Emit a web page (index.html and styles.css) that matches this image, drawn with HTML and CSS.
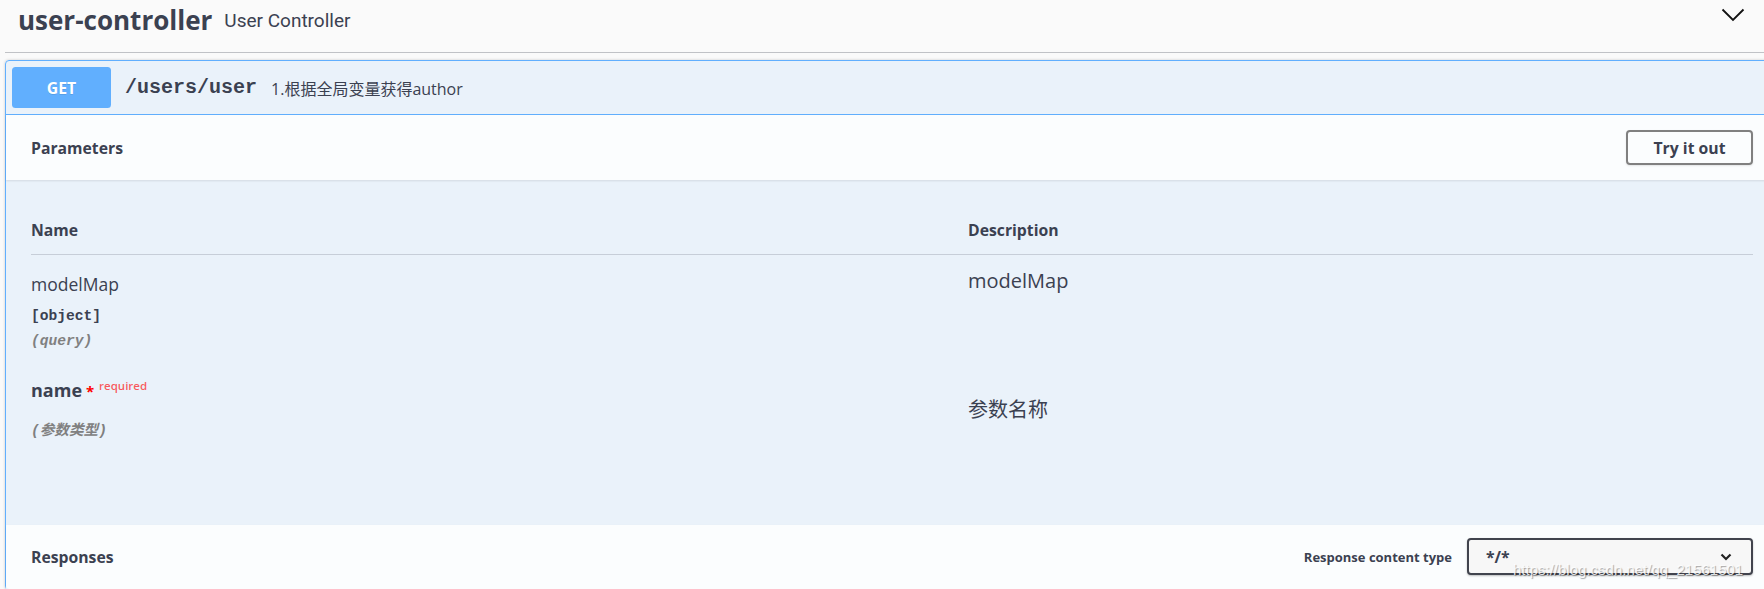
FILE: index.html
```html
<!DOCTYPE html>
<html lang="zh">
<head>
<meta charset="utf-8">
<title>user-controller</title>
<link rel="stylesheet" href="styles.css">
</head>
<body>
<div class="page">
  <div class="tag">
    <h3 class="tag-title"><span class="tag-name">user-controller</span><small class="tag-desc">User Controller</small></h3>
    <svg class="tag-arrow" viewBox="0 0 24 14" width="24" height="14"><polyline points="1.5,1.5 12,12 22.5,1.5" fill="none" stroke="#111" stroke-width="1.8"/></svg>
  </div>

  <div class="opblock">
    <div class="summary">
      <span class="method">GET</span>
      <span class="path">/users/user</span>
      <span class="summary-desc">1.根据全局变量获得author</span>
    </div>

    <div class="section-header">
      <h4 class="section-title">Parameters</h4>
      <button class="try-out">Try it out</button>
    </div>

    <div class="params">
      <div class="params-table">
        <div class="th">Name</div>
        <div class="th">Description</div>

        <div class="name-cell row1">
          <div class="param-name">modelMap</div>
          <div class="param-type">[object]</div>
          <div class="param-in">(query)</div>
        </div>
        <div class="desc-cell first">modelMap</div>

        <div class="name-cell">
          <div class="param-name required">name<span class="star">&nbsp;*</span><span class="req">required</span></div>
          <div class="param-in gap">(参数类型)</div>
        </div>
        <div class="desc-cell second">参数名称</div>
      </div>
    </div>

    <div class="section-header responses">
      <h4 class="section-title">Responses</h4>
      <div class="content-type">
        <span class="ct-label">Response content type</span>
        <div class="select">
          <span>*/*</span>
          <svg class="select-arrow" viewBox="0 0 12 8" width="12" height="8"><polyline points="1.5,1.5 6,6 10.5,1.5" fill="none" stroke="#222" stroke-width="2.2"/></svg>
        </div>
      </div>
    </div>
  </div>

  <div class="watermark">https://blog.csdn.net/qq_21561501</div>
</div>
</body>
</html>
```

FILE: styles.css
```css
html, body {
  margin: 0;
  padding: 0;
}

body {
  background: #fafafa;
  overflow: hidden;
  font-family: "Open Sans", "Noto Sans CJK SC", sans-serif;
  color: #3b4151;
}

.page {
  position: relative;
  margin-left: 5px;
  width: 1771px;
}

/* ---- tag header ---- */
.tag {
  display: flex;
  align-items: flex-start;
  justify-content: space-between;
  height: 52px;
  padding-left: 13px;
  border-bottom: 1px solid rgba(59, 65, 81, 0.3);
}

.tag-title {
  display: flex;
  align-items: center;
  margin: 0;
  padding-top: 1.5px;
  font-size: 26px;
  font-weight: 700;
  line-height: 36px;
  white-space: nowrap;
}

.tag-desc {
  margin-left: 12px;
  padding-top: 3px;
  font-family: Roboto, "Open Sans", sans-serif;
  font-size: 19px;
  font-weight: 400;
  line-height: 24px;
}

.tag-arrow {
  margin-top: 8px;
  margin-right: 31.5px;
}

/* ---- operation block ---- */
.opblock {
  margin-top: 7px;
  border: 1px solid #61affe;
  border-radius: 4px;
  background: rgba(97, 175, 254, 0.1);
  box-shadow: 0 0 3px rgba(0, 0, 0, 0.19);
}

.summary {
  display: flex;
  align-items: center;
  padding: 6px;
  border-bottom: 1px solid #61affe;
}

.method {
  display: flex;
  align-items: center;
  justify-content: center;
  width: 99px;
  height: 41px;
  border-radius: 3.5px;
  background: #61affe;
  color: #fff;
  font-size: 15.75px;
  font-weight: 700;
  text-shadow: 0 1px 0 rgba(0, 0, 0, 0.1);
}

.path {
  margin-left: 14px;
  font-family: "Liberation Mono", monospace;
  font-size: 20px;
  font-weight: 700;
}

.summary-desc {
  margin-left: 14px;
  font-size: 16px;
}

/* ---- section headers ---- */
.section-header {
  position: relative;
  display: flex;
  align-items: center;
  justify-content: space-between;
  height: 65px;
  padding: 0 22px 0 25px;
  background: rgba(255, 255, 255, 0.8);
  box-shadow: 0 1px 2px rgba(0, 0, 0, 0.1);
}

.section-header.responses {
  height: 64px;
}

.section-title {
  margin: 0;
  font-size: 15.75px;
  font-weight: 700;
}

.try-out {
  width: 127px;
  height: 35px;
  padding: 0;
  border: 2px solid #808080;
  border-radius: 4px;
  background: transparent;
  color: #3b4151;
  font-family: "Open Sans", sans-serif;
  font-size: 15.75px;
  font-weight: 700;
  box-shadow: 0 1px 2px rgba(0, 0, 0, 0.1);
}

/* ---- parameters table ---- */
.params {
  padding: 22.5px 22px 71px 25px;
}

.params-table {
  display: grid;
  grid-template-columns: 937px 1fr;
}

.th {
  padding: 15px 0 12.5px;
  font-size: 15.75px;
  font-weight: 700;
  line-height: 24px;
  border-bottom: 1px solid rgba(59, 65, 81, 0.2);
}

.name-cell {
  padding: 15.5px 0 12.5px;
}

.name-cell.row1 {
  padding-bottom: 10.5px;
}

.param-name {
  font-size: 17.5px;
  line-height: 26px;
}

.param-name.required {
  font-size: 18px;
  font-weight: 700;
}

.star {
  color: #f00;
  font-size: 15px;
}

.req {
  position: relative;
  top: -7px;
  padding-left: 5px;
  color: rgba(255, 0, 0, 0.65);
  font-size: 11.5px;
  font-weight: 600;
}

.param-type {
  padding-top: 9.5px;
  font-family: "Liberation Mono", monospace;
  font-size: 14.6px;
  font-weight: 700;
  line-height: 20px;
}

.param-in {
  margin-top: 5px;
  color: #808080;
  font-family: "Liberation Mono", "Noto Sans CJK SC", monospace;
  font-size: 14.6px;
  font-style: italic;
  font-weight: 700;
  line-height: 20px;
}

.param-in.gap {
  margin-top: 15px;
}

.desc-cell {
  font-size: 20px;
  line-height: 30px;
}

.desc-cell.first {
  padding-top: 11px;
}

.desc-cell.second {
  padding-top: 33.5px;
}

/* ---- responses header ---- */
.content-type {
  display: flex;
  align-items: center;
}

.ct-label {
  font-size: 13px;
  font-weight: 700;
}

.select {
  display: flex;
  align-items: center;
  justify-content: space-between;
  box-sizing: border-box;
  width: 286px;
  height: 37px;
  margin-left: 15px;
  padding: 0 19px 0 17px;
  border: 2px solid #41444e;
  border-radius: 4px;
  background: #f7f7f7;
  box-shadow: 0 1px 2px 0 rgba(0, 0, 0, 0.25);
  font-size: 15.75px;
  font-weight: 700;
}

/* ---- overlay watermark ---- */
.watermark {
  position: absolute;
  left: 1508px;
  top: 561px;
  color: rgba(255, 255, 255, 0.85);
  font-family: "Liberation Sans", sans-serif;
  font-size: 15px;
  white-space: nowrap;
  text-shadow: 1px 1px 1px rgba(0, 0, 0, 0.35);
}
```
